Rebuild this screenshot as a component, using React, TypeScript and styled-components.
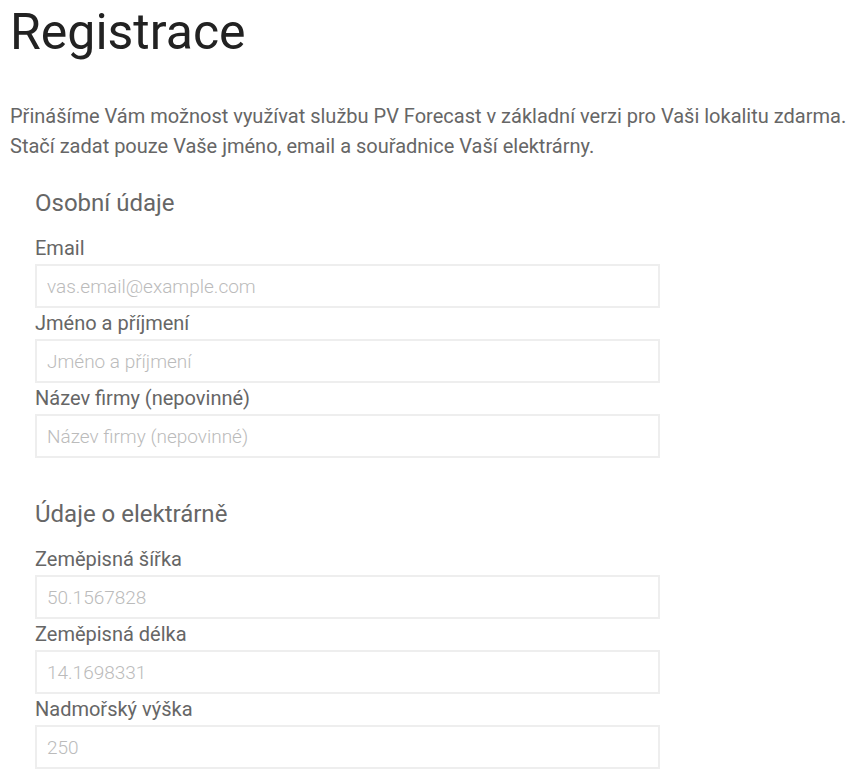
import styled, { createGlobalStyle } from "styled-components";

const GlobalStyle = createGlobalStyle`
  body {
    margin: 0;
    background: #fff;
    font-family: Roboto, "Noto Sans", sans-serif;
  }
`;

const Page = styled.div`
  padding: 0 10px;
`;

const Title = styled.h1`
  margin: 0;
  padding-top: 2px;
  font-size: 50px;
  font-weight: 400;
  line-height: 60px;
  color: #222;
`;

const Intro = styled.p`
  margin: 39px 0 0;
  font-size: 20px;
  line-height: 30px;
  color: #666;
`;

const Form = styled.form`
  padding: 0 25px;
`;

const Section = styled.fieldset<{ $gap: number }>`
  border: 0;
  margin: 0;
  padding: 0;
  margin-top: ${(p) => p.$gap}px;
`;

const Legend = styled.legend`
  padding: 0;
  font-size: 24px;
  line-height: 30px;
  color: #666;
  margin-bottom: 15px;
`;

const Field = styled.label`
  display: flex;
  flex-direction: column;
  width: 625px;
`;

const LabelText = styled.span`
  font-size: 20px;
  line-height: 31px;
  color: #666;
`;

const Input = styled.input`
  box-sizing: border-box;
  height: 44px;
  width: 100%;
  border: 2px solid #eee;
  padding: 0 10px;
  font-family: Roboto, sans-serif;
  font-weight: 300;
  font-size: 19px;
  color: #333;
  outline: none;
  &::placeholder {
    color: #bbb;
  }
`;

type FieldDef = { label: string; placeholder: string };

const personal: FieldDef[] = [
  { label: "Email", placeholder: "vas.email@example.com" },
  { label: "Jméno a příjmení", placeholder: "Jméno a příjmení" },
  { label: "Název firmy (nepovinné)", placeholder: "Název firmy (nepovinné)" },
];

const plant: FieldDef[] = [
  { label: "Zeměpisná šířka", placeholder: "50.1567828" },
  { label: "Zeměpisná délka", placeholder: "14.1698331" },
  { label: "Nadmořský výška", placeholder: "250" },
];

export default function App() {
  return (
    <Page>
      <GlobalStyle />
      <Title>Registrace</Title>
      <Intro>
        Přinášíme Vám možnost využívat službu PV Forecast v základní verzi pro Vaši lokalitu zdarma.
        <br />
        Stačí zadat pouze Vaše jméno, email a souřadnice Vaší elektrárny.
      </Intro>
      <Form>
        <Section $gap={27}>
          <Legend>Osobní údaje</Legend>
          {personal.map((f) => (
            <Field key={f.label}>
              <LabelText>{f.label}</LabelText>
              <Input placeholder={f.placeholder} />
            </Field>
          ))}
        </Section>
        <Section $gap={41}>
          <Legend>Údaje o elektrárně</Legend>
          {plant.map((f) => (
            <Field key={f.label}>
              <LabelText>{f.label}</LabelText>
              <Input placeholder={f.placeholder} />
            </Field>
          ))}
        </Section>
      </Form>
    </Page>
  );
}
